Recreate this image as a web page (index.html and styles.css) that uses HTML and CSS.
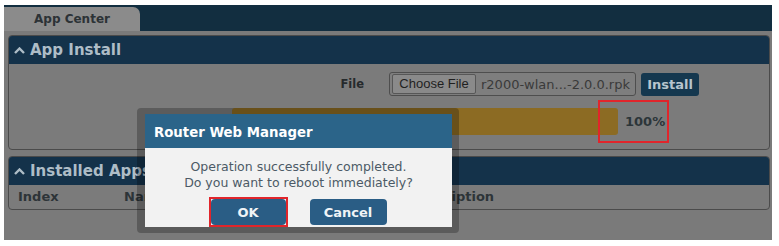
FILE: index.html
```html
<!DOCTYPE html>
<html lang="en">
<head>
    <meta charset="UTF-8">
    <meta name="viewport" content="width=device-width, initial-scale=1.0">
    <title>App Center</title>
    <link rel="stylesheet" href="styles.css">
</head>
<body>

<div class="page">
    <div class="tabbar">
        <div class="tab">App Center</div>
    </div>

    <section class="panel">
        <h2 class="panel-head">
            <svg class="chev" viewBox="0 0 11 7"><polyline points="1,6 5.5,1.5 10,6"/></svg>
            App Install
        </h2>
        <div class="panel-body install-body">
            <div class="file-row">
                <label class="field-label">File</label>
                <div class="file-input">
                    <span class="file-btn">Choose File</span>
                    <span class="file-name">r2000-wlan...-2.0.0.rpk</span>
                </div>
                <button class="btn-install">Install</button>
            </div>
            <div class="progress-row">
                <div class="progress"><div class="progress-fill" style="width: 100%"></div></div>
                <span class="progress-val">100%</span>
            </div>
        </div>
    </section>

    <section class="panel apps">
        <h2 class="panel-head">
            <svg class="chev" viewBox="0 0 11 7"><polyline points="1,6 5.5,1.5 10,6"/></svg>
            Installed Apps
        </h2>
        <div class="panel-body">
            <div class="apps-head">
                <span>Index</span>
                <span>Name</span>
                <span>Version</span>
                <span>Description</span>
            </div>
        </div>
    </section>
</div>

<div class="modal-frame">
    <div class="modal">
        <div class="modal-head">Router Web Manager</div>
        <div class="modal-body">
            <p>Operation successfully completed.<br>Do you want to reboot immediately?</p>
            <div class="modal-actions">
                <button class="btn-modal btn-ok">OK</button>
                <button class="btn-modal">Cancel</button>
            </div>
        </div>
    </div>
</div>

<!-- screenshot annotations -->
<div class="mark mark-progress"></div>
<div class="mark mark-ok"></div>

</body>
</html>
```

FILE: styles.css
```css
* {
    margin: 0;
    padding: 0;
    box-sizing: border-box;
}

body {
    font-family: "DejaVu Sans", Verdana, sans-serif;
    background-color: #ffffff;
    position: relative;
    width: 779px;
    height: 246px;
    overflow: hidden;
}

.page {
    margin: 5px 7px 0 4px;
    height: 235px;
    background-color: #7a7a7a;
}

/* tabs */
.tabbar {
    height: 26px;
    padding-top: 2px;
    background-color: #122e40;
}

.tab {
    width: 136px;
    height: 24px;
    line-height: 25px;
    text-align: center;
    font-size: 12px;
    font-weight: bold;
    color: #2c3236;
    background-color: #8b8b8b;
    border-top-right-radius: 7px;
}

/* panels */
.panel {
    margin: 4px 2px 0 4px;
    border: 1px solid #4b4b4b;
    border-radius: 4px;
    overflow: hidden;
    background-color: #7b7b7b;
}

.panel.apps {
    margin-top: 6px;
}

.panel-head {
    display: flex;
    align-items: center;
    height: 28px;
    padding-left: 5px;
    background-color: #14324a;
    color: #aebdc7;
    font-size: 15px;
    font-weight: bold;
}

.chev {
    width: 11px;
    height: 7px;
    margin-right: 5px;
    margin-top: 1px;
    fill: none;
    stroke: #aebdc7;
    stroke-width: 2.4;
}

.install-body {
    padding: 8px 0 14px;
}

.file-row {
    display: flex;
    align-items: center;
    height: 24px;
}

.field-label {
    width: 355px;
    margin-right: 25px;
    text-align: right;
    font-size: 11.5px;
    font-weight: bold;
    color: #262a2c;
}

.file-input {
    display: flex;
    align-items: center;
    width: 247px;
    height: 24px;
    padding: 0 2px;
    border: 1px solid #4e4e4e;
    border-radius: 3px;
    background-color: #7e7e7e;
}

.file-btn {
    width: 84px;
    height: 20px;
    line-height: 18px;
    text-align: center;
    font-family: "Liberation Sans", Arial, sans-serif;
    font-size: 13px;
    color: #1f1f1f;
    background-color: #8a8a8a;
    border: 1px solid #575757;
    border-radius: 2px;
}

.file-name {
    margin-left: 5px;
    font-size: 13px;
    color: #3a3a3a;
    white-space: nowrap;
}

.btn-install {
    margin-left: 5px;
    width: 58px;
    height: 23px;
    border: none;
    border-radius: 3px;
    background-color: #15384f;
    color: #b7c5ce;
    font-family: "DejaVu Sans", Verdana, sans-serif;
    font-size: 13px;
    font-weight: bold;
}

.progress-row {
    display: flex;
    align-items: center;
    margin-top: 12px;
    padding-left: 223px;
}

.progress {
    width: 386px;
    height: 27px;
    border-radius: 3px;
    overflow: hidden;
    background-color: #6c6c6c;
}

.progress-fill {
    height: 100%;
    background-color: #8c6b23;
}

.progress-val {
    margin-left: 7px;
    font-size: 13px;
    font-weight: bold;
    color: #2c3539;
}

.apps-head {
    display: grid;
    grid-template-columns: 106px 136px 150px 1fr;
    height: 24px;
    line-height: 24px;
    font-size: 13px;
    font-weight: bold;
    color: #2d3438;
}

.apps-head span {
    padding-left: 9px;
}

/* dialog */
.modal-frame {
    position: absolute;
    left: 137px;
    top: 108px;
    width: 322px;
    height: 125px;
    padding: 6px 7px 6px 8px;
    border-radius: 4px;
    background-color: rgba(0, 0, 0, 0.25);
}

.modal {
    height: 113px;
    background-color: #f2f2f2;
}

.modal-head {
    display: flex;
    align-items: center;
    height: 34px;
    padding: 3px 0 0 9px;
    background-color: #2b6489;
    color: #ffffff;
    font-size: 13.3px;
    font-weight: bold;
}

.modal-body {
    padding-top: 11px;
    text-align: center;
}

.modal-body p {
    font-size: 12.5px;
    line-height: 16px;
    color: #4c5a66;
}

.modal-actions {
    display: flex;
    justify-content: center;
    gap: 24px;
    margin-top: 8px;
}

.btn-modal {
    width: 77px;
    height: 26px;
    border: none;
    border-radius: 4px;
    background-color: #2a5d85;
    color: #f0f4f7;
    font-family: "DejaVu Sans", Verdana, sans-serif;
    font-size: 13px;
    font-weight: bold;
}

.btn-ok {
    width: 75px;
}

/* annotations */
.mark {
    position: absolute;
    border: 2px solid #e1252b;
}

.mark-progress {
    left: 598px;
    top: 100px;
    width: 71px;
    height: 43px;
}

.mark-ok {
    left: 209px;
    top: 197px;
    width: 79px;
    height: 30px;
}
```
